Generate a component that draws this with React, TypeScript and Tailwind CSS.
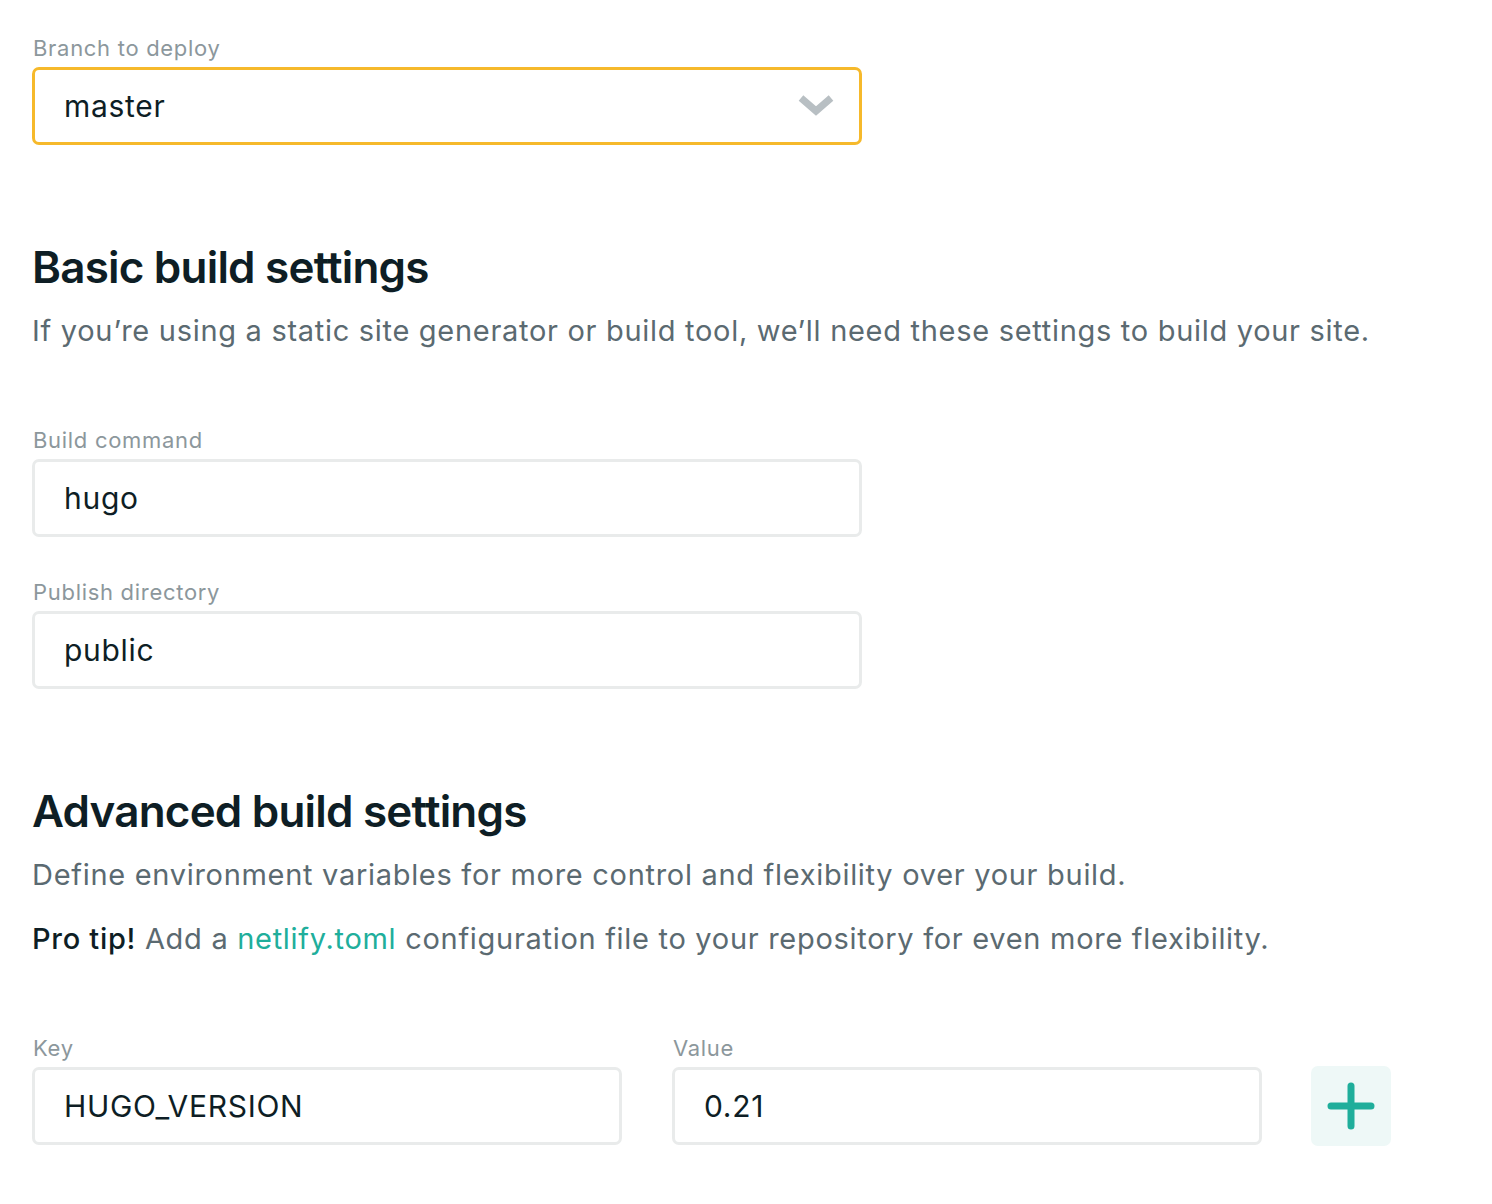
export default function App() {
  const font = { fontFamily: "Inter, 'Noto Sans', sans-serif" };

  return (
    <div
      className="min-h-screen bg-white pl-8 pt-[33px] text-[#0e1e25] antialiased"
      style={font}
    >
      {/* ── Branch ── */}
      <Label>Branch to deploy</Label>
      <div className="mt-1 flex h-[78px] w-[830px] items-center justify-between rounded-[7px] border-[3px] border-[#f6b92b] pl-[29px] pr-6">
        <span className="text-[30px] tracking-[0.7px]">master</span>
        <svg width="38" height="26" viewBox="0 0 38 26" className="-mt-0.5">
          <path
            d="M4 6 L19 19 L34 6"
            fill="none"
            stroke="#b8bfc3"
            strokeWidth="7"
          />
        </svg>
      </div>

      {/* ── Basic build settings ── */}
      <h2 className="mt-[94px] text-[44px] leading-[56px] font-semibold tracking-[-0.8px]">
        Basic build settings
      </h2>
      <p className="mt-4 text-[29px] leading-[40px] tracking-[0.7px] text-[#5b6a71]">
        If you’re using a static site generator or build tool, we’ll need
        these settings to build your site.
      </p>

      <div className="mt-[74px]">
        <Label>Build command</Label>
        <Field value="hugo" className="w-[830px]" />
      </div>
      <div className="mt-10">
        <Label>Publish directory</Label>
        <Field value="public" className="w-[830px]" />
      </div>

      {/* ── Advanced build settings ── */}
      <h2 className="mt-[94px] text-[44px] leading-[56px] font-semibold tracking-[-0.8px]">
        Advanced build settings
      </h2>
      <p className="mt-4 text-[29px] leading-[40px] tracking-[0.7px] text-[#5b6a71]">
        Define environment variables for more control and flexibility over
        your build.
      </p>
      <p className="mt-6 text-[29px] leading-[40px] tracking-[0.7px] text-[#5b6a71]">
        <span className="font-medium text-[#0e1e25]">Pro tip!</span> Add a{" "}
        <a className="text-[#20ae9b]">netlify.toml</a> configuration file to
        your repository for even more flexibility.
      </p>

      <div className="mt-[74px] flex items-end">
        <div className="w-[590px]">
          <Label>Key</Label>
          <Field value="HUGO_VERSION" className="w-[590px]" />
        </div>
        <div className="ml-[50px] w-[590px]">
          <Label>Value</Label>
          <Field value="0.21" className="w-[590px]" />
        </div>
        <button className="mb-[-1px] ml-[49px] flex h-20 w-20 items-center justify-center rounded-[7px] bg-[#eef8f7]">
          <svg width="52" height="52" viewBox="0 0 52 52">
            <path
              d="M26 6 V46 M6 26 H46"
              stroke="#1fae9b"
              strokeWidth="7"
              strokeLinecap="round"
            />
          </svg>
        </button>
      </div>
    </div>
  );
}

function Label({ children }: { children: React.ReactNode }) {
  return (
    <div className="pl-px text-[22px] leading-[30px] tracking-[0.7px] text-[#8c979c]">
      {children}
    </div>
  );
}

function Field({ value, className }: { value: string; className?: string }) {
  return (
    <div
      className={`mt-1 flex h-[78px] items-center rounded-[7px] border-[3px] border-[#e9ebeb] pl-[29px] text-[30px] tracking-[0.7px] ${className ?? ""}`}
    >
      {value}
    </div>
  );
}
